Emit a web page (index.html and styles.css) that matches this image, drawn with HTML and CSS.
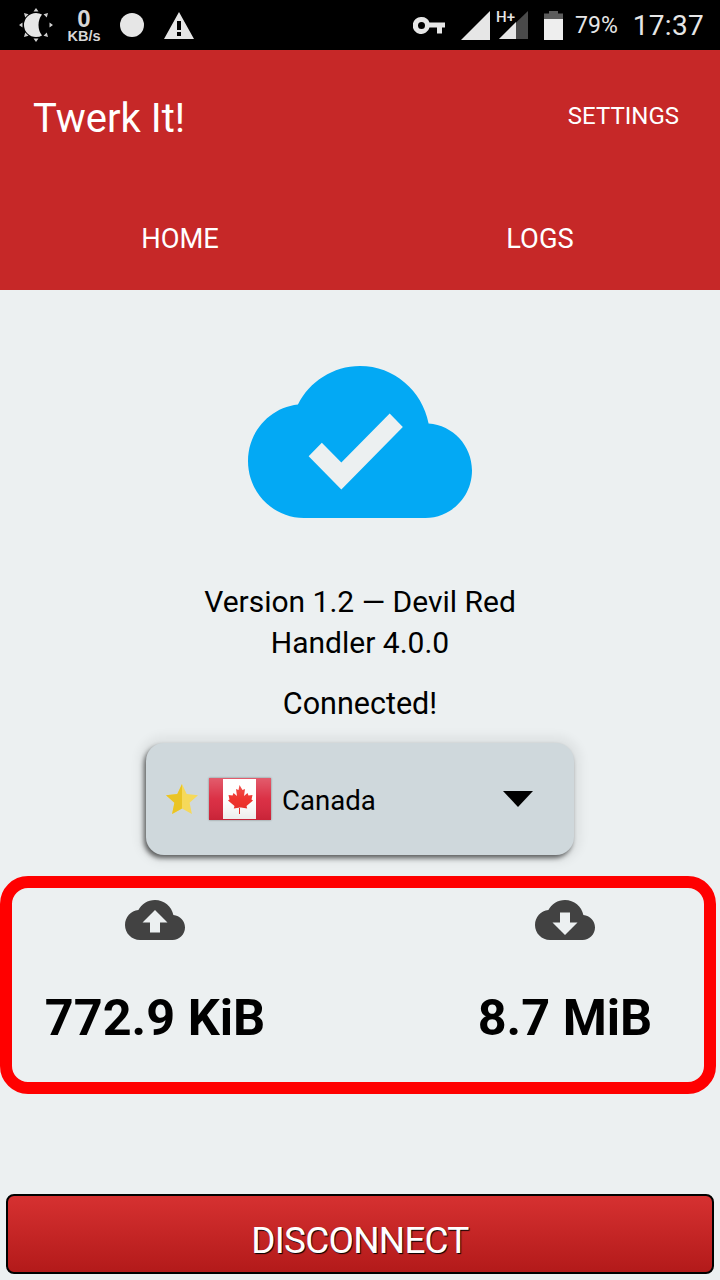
FILE: index.html
```html
<!DOCTYPE html>
<html lang="en">
<head>
    <meta charset="UTF-8">
    <meta name="viewport" content="width=device-width, initial-scale=1.0">
    <title>Twerk It!</title>
    <link rel="stylesheet" href="styles.css">
</head>
<body>
    <div class="status-bar">
        <div class="status-left">
            <svg class="icon-brightness" viewBox="0 0 34 34" aria-hidden="true">
                <path fill="#e6e6e6" d="M17 5Q20.500 5 23 6.500Q19.500 11 19.500 17Q19.500 23 23 27.500Q20.500 29 17 29A12 12 0 0 1 17 5z"/>
                <path fill="#cfcfcf" d="M17 0l2.500 3.500h-5zM17 34l-2.500-3.500h5zM0 17l3.500-2.500v5zM34 17l-3.500 2.500v-5zM5 5l4.500 1.200-3.300 3.300zM29 5l-1.200 4.500-3.300-3.300zM5 29l1.200-4.500 3.300 3.300zM29 29l-4.500-1.200 3.300-3.300z"/>
            </svg>
            <div class="net-speed">
                <span class="net-value">0</span>
                <span class="net-unit">KB/s</span>
            </div>
            <span class="dot"></span>
            <svg class="icon-warning" viewBox="0 0 30 27" aria-hidden="true">
                <path fill="#e6e6e6" fill-rule="evenodd" d="M15 0l15 27H0zM13 9v9h4V9zM13 20v4h4v-4z"/>
            </svg>
        </div>
        <div class="status-right">
            <svg class="icon-key" viewBox="0 0 32 17" aria-hidden="true">
                <path fill="#e6e6e6" fill-rule="evenodd" d="M8.500 0a8.500 8.500 0 0 1 8 5.500H32v5h-3v6h-5v-6h-7.500a8.500 8.500 0 1 1-8-10.500zM8.500 5a3.500 3.500 0 1 0 0 7a3.500 3.500 0 0 0 0-7z"/>
            </svg>
            <svg class="icon-signal" viewBox="0 0 29 29" aria-hidden="true">
                <path fill="#e6e6e6" d="M29 0v29H0z"/>
            </svg>
            <div class="signal-data">
                <span class="signal-type">H+</span>
                <svg class="icon-signal-data" viewBox="0 0 29 28" aria-hidden="true">
                    <path fill="#4a4a4a" d="M29 0v28H0z"/>
                    <path fill="#e6e6e6" d="M17 11v17H0z"/>
                </svg>
            </div>
            <svg class="icon-battery" viewBox="0 0 19 29" aria-hidden="true">
                <path fill="#5c5c5c" d="M5 0h9v2.500h5V8H0V2.500h5z"/>
                <path fill="#eeeeee" d="M0 8h19v21H0z"/>
            </svg>
            <span class="battery-text">79%</span>
            <span class="clock">17:37</span>
        </div>
    </div>

    <header class="toolbar">
        <div class="toolbar-top">
            <span class="app-title">Twerk It!</span>
            <span class="settings">SETTINGS</span>
        </div>
        <nav class="tabs">
            <span class="tab">HOME</span>
            <span class="tab">LOGS</span>
        </nav>
    </header>

    <main class="content">
        <svg class="cloud-done" viewBox="0 4 24 16" preserveAspectRatio="none" aria-hidden="true">
            <path fill="#03a9f4" d="M19.350 10.040C18.670 6.590 15.640 4 12 4 9.110 4 6.600 5.640 5.350 8.040 2.340 8.360 0 10.910 0 14c0 3.310 2.690 6 6 6h13c2.760 0 5-2.240 5-5 0-2.640-2.050-4.780-4.650-4.960zM10 17l-3.500-3.500 1.410-1.410L10 14.170 15.180 9l1.410 1.410L10 17z"/>
        </svg>

        <p class="version">Version 1.2 — Devil Red<br>Handler 4.0.0</p>
        <p class="state">Connected!</p>

        <div class="spinner">
            <svg class="star" viewBox="0 0 32 30" aria-hidden="true">
                <path fill="#f6d95a" d="M16 0l4.700 10 11.300 1.300-8.400 7.500 2.300 11.200L16 24.400 6.100 30l2.300-11.200L0 11.300 11.300 10z"/>
                <path fill="#eac425" d="M16 0v24.400L6.100 30l2.300-11.200L0 11.300 11.300 10z"/>
            </svg>
            <svg class="flag" viewBox="0 0 62 42" aria-hidden="true">
                <defs>
                    <linearGradient id="flagShine" x1="0" y1="0" x2="0" y2="1">
                        <stop offset="0" stop-color="#ffffff" stop-opacity="0.25"/>
                        <stop offset="0.5" stop-color="#ffffff" stop-opacity="0.05"/>
                        <stop offset="1" stop-color="#000000" stop-opacity="0.08"/>
                    </linearGradient>
                </defs>
                <path fill="#d9263c" d="M0 0h62v42H0z"/>
                <path fill="#ffffff" d="M14 1h33v40H14z"/>
                <path fill="#ee2a24" d="M30.500 7l3 5 2.500-1-1 7 3.500-3 1 2.500 4-.5-1 4.500 1.500 1-6.500 5.500.7 2.500-6.200-1h-1l-6.200 1 .7-2.500-6.500-5.500 1.500-1-1-4.500 4 .5 1-2.500 3.500 3-1-7 2.500 1z"/>
                <path fill="#ee2a24" d="M30 30h1v6h-1z"/>
                <path fill="url(#flagShine)" d="M0 0h62v42H0z"/>
            </svg>
            <span class="country">Canada</span>
            <svg class="caret" viewBox="0 0 30 16" aria-hidden="true">
                <path fill="#000000" d="M0 0h30L15 16z"/>
            </svg>
        </div>

        <section class="stats">
            <div class="stat">
                <svg class="stat-icon" viewBox="0 4 24 16" preserveAspectRatio="none" aria-hidden="true">
                    <path fill="#424242" d="M19.350 10.040C18.670 6.590 15.640 4 12 4 9.110 4 6.600 5.640 5.350 8.040 2.340 8.360 0 10.910 0 14c0 3.310 2.690 6 6 6h13c2.760 0 5-2.240 5-5 0-2.640-2.050-4.780-4.650-4.960zM14 13v4h-4v-4H7l5-5 5 5h-3z"/>
                </svg>
                <span class="stat-value">772.9 KiB</span>
            </div>
            <div class="stat">
                <svg class="stat-icon" viewBox="0 4 24 16" preserveAspectRatio="none" aria-hidden="true">
                    <path fill="#424242" d="M19.350 10.040C18.670 6.590 15.640 4 12 4 9.110 4 6.600 5.640 5.350 8.040 2.340 8.360 0 10.910 0 14c0 3.310 2.690 6 6 6h13c2.760 0 5-2.240 5-5 0-2.640-2.050-4.780-4.650-4.960zM17 13l-5 5-5-5h3V9h4v4h3z"/>
                </svg>
                <span class="stat-value">8.7 MiB</span>
            </div>
        </section>

        <button type="button" class="disconnect">DISCONNECT</button>
    </main>
</body>
</html>
```

FILE: styles.css
```css
:root {
    --primary-color: #c62828;
    --bg-color: #ecf0f1;
    --spinner-bg: #cfd8dc;
    --status-light: #e6e6e6;
}

* {
    margin: 0;
    padding: 0;
    box-sizing: border-box;
}

body {
    width: 720px;
    height: 1280px;
    overflow: hidden;
    display: flex;
    flex-direction: column;
    background: var(--bg-color);
    color: #000;
    font-family: Roboto, sans-serif;
}

/* status bar */
.status-bar {
    height: 50px;
    flex: none;
    display: flex;
    justify-content: space-between;
    background: #000;
    color: var(--status-light);
}

.status-left, .status-right {
    display: flex;
    align-items: center;
}

.status-left {
    padding-left: 19px;
}

.status-right {
    padding-right: 16px;
}

.icon-brightness {
    width: 34px;
    height: 34px;
}

.net-speed {
    width: 34px;
    margin-left: 14px;
    display: flex;
    flex-direction: column;
    align-items: center;
    font-family: "Liberation Sans", sans-serif;
    font-weight: 700;
    color: #d6d6d6;
}

.net-value {
    font-size: 24px;
    line-height: 21px;
}

.net-unit {
    font-size: 14.5px;
    line-height: 14px;
}

.dot {
    width: 24px;
    height: 24px;
    margin-left: 19px;
    border-radius: 50%;
    background: var(--status-light);
}

.icon-warning {
    width: 30px;
    height: 27px;
    margin-left: 20px;
}

.icon-key {
    width: 32px;
    height: 17px;
}

.icon-signal {
    width: 29px;
    height: 29px;
    margin-left: 16px;
}

.signal-data {
    position: relative;
    width: 29px;
    height: 28px;
    margin-left: 9px;
}

.signal-type {
    position: absolute;
    left: -3px;
    top: 0;
    font-size: 15px;
    line-height: 13px;
    font-weight: 500;
    color: var(--status-light);
}

.icon-signal-data {
    display: block;
    width: 29px;
    height: 28px;
}

.icon-battery {
    width: 19px;
    height: 29px;
    margin-left: 16px;
}

.battery-text {
    margin-left: 12px;
    font-size: 23px;
}

.clock {
    margin-left: 15px;
    font-size: 28px;
    letter-spacing: 0.3px;
}

/* toolbar */
.toolbar {
    height: 240px;
    flex: none;
    background: var(--primary-color);
    color: #fff;
}

.toolbar-top {
    height: 134px;
    display: flex;
    justify-content: space-between;
    align-items: center;
    padding: 2px 41px 0 33px;
}

.app-title {
    font-size: 40px;
}

.settings {
    font-size: 24px;
    margin-top: -4px;
}

.tabs {
    height: 106px;
    display: grid;
    grid-template-columns: 1fr 1fr;
    align-items: center;
    padding-top: 4px;
    text-align: center;
}

.tab {
    font-size: 27.3px;
}

/* main content */
.content {
    flex: 1;
    display: flex;
    flex-direction: column;
    align-items: center;
    padding-top: 76px;
}

.cloud-done {
    width: 224px;
    height: 152px;
    flex: none;
    filter: blur(0.5px);
}

.version {
    margin-top: 63px;
    font-size: 30px;
    line-height: 41px;
    text-align: center;
}

.state {
    margin-top: 20px;
    font-size: 30.5px;
    line-height: 41px;
}

.spinner {
    width: 428px;
    height: 112px;
    margin-top: 19px;
    flex: none;
    display: flex;
    align-items: center;
    padding: 0 41px 0 20px;
    border-radius: 18px;
    background: var(--spinner-bg);
    box-shadow: -2px 3px 5px rgba(0, 0, 0, 0.6), 0 0 10px 8px rgba(0, 0, 0, 0.05);
}

.star {
    width: 32px;
    height: 30px;
    filter: blur(0.5px);
}

.flag {
    width: 62px;
    height: 42px;
    margin-left: 11px;
    box-shadow: 0 0 2px rgba(0, 0, 0, 0.4);
    filter: blur(0.6px);
}

.country {
    margin-left: 11px;
    margin-top: 2px;
    font-size: 27.6px;
}

.caret {
    width: 30px;
    height: 16px;
    margin-left: auto;
}

.stats {
    width: 716px;
    height: 218px;
    margin-top: 21px;
    flex: none;
    align-self: flex-start;
    display: flex;
    gap: 190px;
    padding: 12px 0 0 33px;
    border: 12px solid #ff0000;
    border-radius: 28px;
}

.stat {
    width: 220px;
    display: flex;
    flex-direction: column;
    align-items: center;
}

.stat-icon {
    width: 60px;
    height: 40px;
    filter: blur(0.5px);
}

.stat-value {
    margin-top: 48px;
    font-size: 50.4px;
    line-height: 60px;
    font-weight: 700;
    white-space: nowrap;
}

.disconnect {
    width: 708px;
    height: 80px;
    margin-top: auto;
    margin-bottom: 6px;
    padding-top: 12px;
    flex: none;
    border: 2px solid #000;
    border-radius: 8px;
    background: linear-gradient(#d63131, #b31a1a);
    color: #fff;
    font-family: Roboto, sans-serif;
    font-size: 37px;
    letter-spacing: -0.8px;
    text-shadow: 1px 1px 1px #000;
}
```
